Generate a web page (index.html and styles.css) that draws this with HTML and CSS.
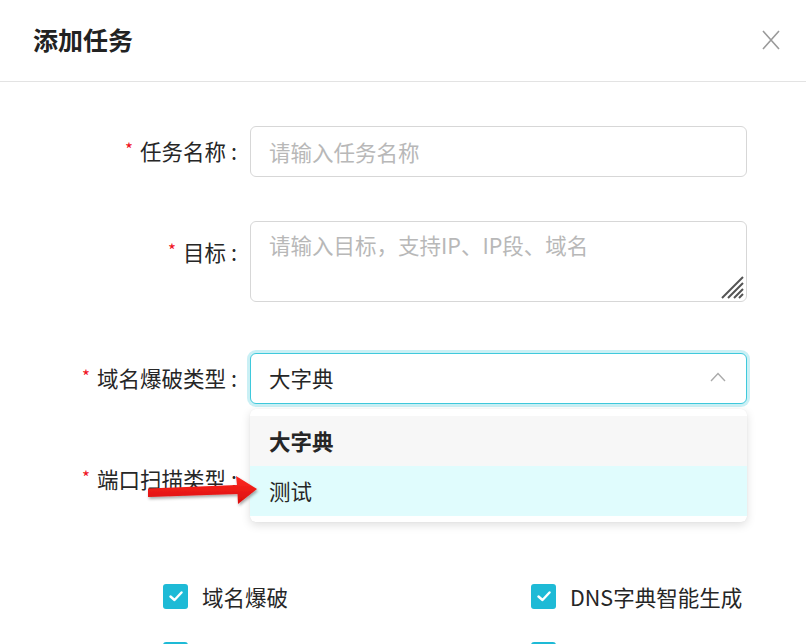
FILE: index.html
```html
<!DOCTYPE html>
<html lang="zh-CN">
<head>
<meta charset="utf-8">
<title>添加任务</title>
<link rel="stylesheet" href="styles.css">
</head>
<body>
<div class="modal">
  <header class="modal-header">
    <h2 class="title">添加任务</h2>
    <button class="close" type="button" aria-label="关闭">
      <svg width="18" height="20" viewBox="0 0 18 20"><path d="M1 1 L17 19 M17 1 L1 19" stroke="#9a9a9a" stroke-width="1.6" fill="none"/></svg>
    </button>
  </header>

  <form class="form">
    <div class="row row-name">
      <label class="label"><span class="req">*</span>任务名称<span class="colon">:</span></label>
      <div class="control"><input class="input" type="text" placeholder="请输入任务名称"></div>
    </div>

    <div class="row row-target">
      <label class="label label-top"><span class="req">*</span>目标<span class="colon">:</span></label>
      <div class="control textarea-wrap">
        <textarea class="textarea" placeholder="请输入目标，支持IP、IP段、域名"></textarea>
        <svg class="grip" width="26" height="26" viewBox="0 0 26 26">
          <path d="M3 24 L24 3 M9 24 L24 9 M15 24 L24 15 M20 24 L24 20" stroke="#555" stroke-width="2" fill="none"/>
        </svg>
      </div>
    </div>

    <div class="row row-dns">
      <label class="label"><span class="req">*</span>域名爆破类型<span class="colon">:</span></label>
      <div class="control select-wrap">
        <div class="select is-focus">
          <span class="select-value">大字典</span>
          <svg class="chevron" width="16" height="10" viewBox="0 0 16 10"><path d="M1 9 L8 1.5 L15 9" stroke="#aaa" stroke-width="1.4" fill="none"/></svg>
        </div>
        <ul class="dropdown">
          <li class="option option-selected">大字典</li>
          <li class="option option-hover">测试</li>
        </ul>
      </div>
    </div>

    <div class="row row-port">
      <label class="label"><span class="req">*</span>端口扫描类型<span class="colon">:</span></label>
      <div class="control">
        <div class="select"></div>
      </div>
    </div>
  </form>

  <div class="checks">
    <label class="check"><span class="box"><svg width="14" height="11" viewBox="0 0 14 11"><path d="M1.5 5.5 L5.5 9 L12.5 1.5" stroke="#fff" stroke-width="2.4" fill="none" stroke-linecap="round" stroke-linejoin="round"/></svg></span>域名爆破</label>
    <label class="check"><span class="box"><svg width="14" height="11" viewBox="0 0 14 11"><path d="M1.5 5.5 L5.5 9 L12.5 1.5" stroke="#fff" stroke-width="2.4" fill="none" stroke-linecap="round" stroke-linejoin="round"/></svg></span>DNS字典智能生成</label>
    <label class="check"><span class="box"><svg width="14" height="11" viewBox="0 0 14 11"><path d="M1.5 5.5 L5.5 9 L12.5 1.5" stroke="#fff" stroke-width="2.4" fill="none" stroke-linecap="round" stroke-linejoin="round"/></svg></span>端口扫描</label>
    <label class="check"><span class="box"><svg width="14" height="11" viewBox="0 0 14 11"><path d="M1.5 5.5 L5.5 9 L12.5 1.5" stroke="#fff" stroke-width="2.4" fill="none" stroke-linecap="round" stroke-linejoin="round"/></svg></span>服务识别</label>
  </div>

  <svg class="pointer-arrow" width="130" height="44" viewBox="0 0 130 44">
    <defs>
      <filter id="sh" x="-10%" y="-30%" width="130%" height="170%">
        <feDropShadow dx="1" dy="2" stdDeviation="1.5" flood-color="#000" flood-opacity="0.35"/>
      </filter>
      <linearGradient id="rg" x1="0" y1="0" x2="0" y2="1">
        <stop offset="0" stop-color="#ff2a22"/>
        <stop offset="1" stop-color="#d90c0c"/>
      </linearGradient>
    </defs>
    <path filter="url(#sh)" fill="url(#rg)" d="M8 18.5 L97 15 L96 6 L117 19 L98 34 L97.5 24 L8 27 Z"/>
  </svg>
</div>
</body>
</html>
```

FILE: styles.css
```css
* { box-sizing: border-box; }

html, body {
  margin: 0;
  padding: 0;
  background: #fff;
}

body {
  font-family: "Noto Sans CJK SC", "Noto Sans", sans-serif;
  color: #262626;
  width: 806px;
  height: 644px;
  overflow: hidden;
}

.modal {
  position: relative;
  width: 806px;
  height: 644px;
  overflow: hidden;
}

.modal-header {
  height: 82px;
  border-bottom: 1px solid #e3e3e3;
  display: flex;
  align-items: center;
  justify-content: space-between;
  padding: 0 26px 0 33px;
}

.title {
  margin: 0;
  font-size: 25px;
  font-weight: 700;
  line-height: 1;
  color: #222;
  padding-bottom: 3px;
}

.close {
  border: 0;
  background: none;
  padding: 0;
  width: 18px;
  height: 20px;
  display: flex;
  cursor: pointer;
  margin-bottom: 2px;
}

.form {
  padding-top: 44px;
  padding-right: 59px;
}

.row {
  display: flex;
  align-items: center;
}

.row-name { margin-bottom: 44px; }
.row-target { margin-bottom: 51px; align-items: flex-start; }
.row-dns { margin-bottom: 50px; }

.label {
  width: 250px;
  flex: none;
  text-align: right;
  padding-right: 13px;
  font-size: 21.5px;
  line-height: 30px;
  color: #262626;
  white-space: nowrap;
}

.colon {
  margin-left: 5px;
}

.label-top { padding-top: 16px; }

.req {
  color: #f0141e;
  font-size: 17px;
  margin-right: 7px;
  position: relative;
  top: -4px;
}

.control {
  flex: 1;
  position: relative;
}

.input,
.textarea,
.select {
  width: 100%;
  border: 1px solid #d7d7d7;
  border-radius: 6px;
  font-family: inherit;
  font-size: 21.5px;
  color: #262626;
  background: #fff;
  outline: none;
}

.input {
  height: 51px;
  padding: 0 18px;
}

.input::placeholder,
.textarea::placeholder {
  color: #b8b8b8;
}

.textarea-wrap { height: 81px; }

.textarea {
  display: block;
  height: 81px;
  padding: 7px 18px;
  line-height: 32px;
  resize: none;
}

.grip {
  position: absolute;
  right: 2px;
  bottom: 2px;
}

.select {
  height: 51px;
  padding: 0 20px 2px 18px;
  display: flex;
  align-items: center;
  justify-content: space-between;
}

.select.is-focus {
  border-color: #3fc9dc;
  box-shadow: 0 0 0 3px rgba(63, 201, 220, 0.28);
}

.select-value { line-height: 1; }

.chevron { margin-top: -1px; }

.dropdown {
  position: absolute;
  top: 56px;
  left: 0;
  right: 0;
  margin: 0;
  padding: 7px 0 6px;
  list-style: none;
  background: #fff;
  border-radius: 6px;
  box-shadow: 0 3px 10px rgba(0, 0, 0, 0.13), 0 0 1px rgba(0, 0, 0, 0.08);
  z-index: 5;
}

.option {
  height: 50px;
  display: flex;
  align-items: center;
  padding-left: 19px;
  padding-bottom: 2px;
  font-size: 21.5px;
  color: #262626;
}

.option-selected {
  font-weight: 700;
  background: #f7f7f7;
}

.option-hover {
  background: #e0fcfd;
}

.checks {
  margin-top: 79px;
  margin-left: 163px;
  display: grid;
  grid-template-columns: 368px 1fr;
  row-gap: 33px;
}

.check {
  display: flex;
  align-items: center;
  font-size: 21.5px;
  line-height: 25px;
  color: #262626;
}

.box {
  width: 25px;
  height: 25px;
  border-radius: 3px;
  background: #1ebad6;
  display: flex;
  align-items: center;
  justify-content: center;
  margin-right: 14px;
  flex: none;
}

.pointer-arrow {
  position: absolute;
  left: 140px;
  top: 470px;
  z-index: 10;
}
```
